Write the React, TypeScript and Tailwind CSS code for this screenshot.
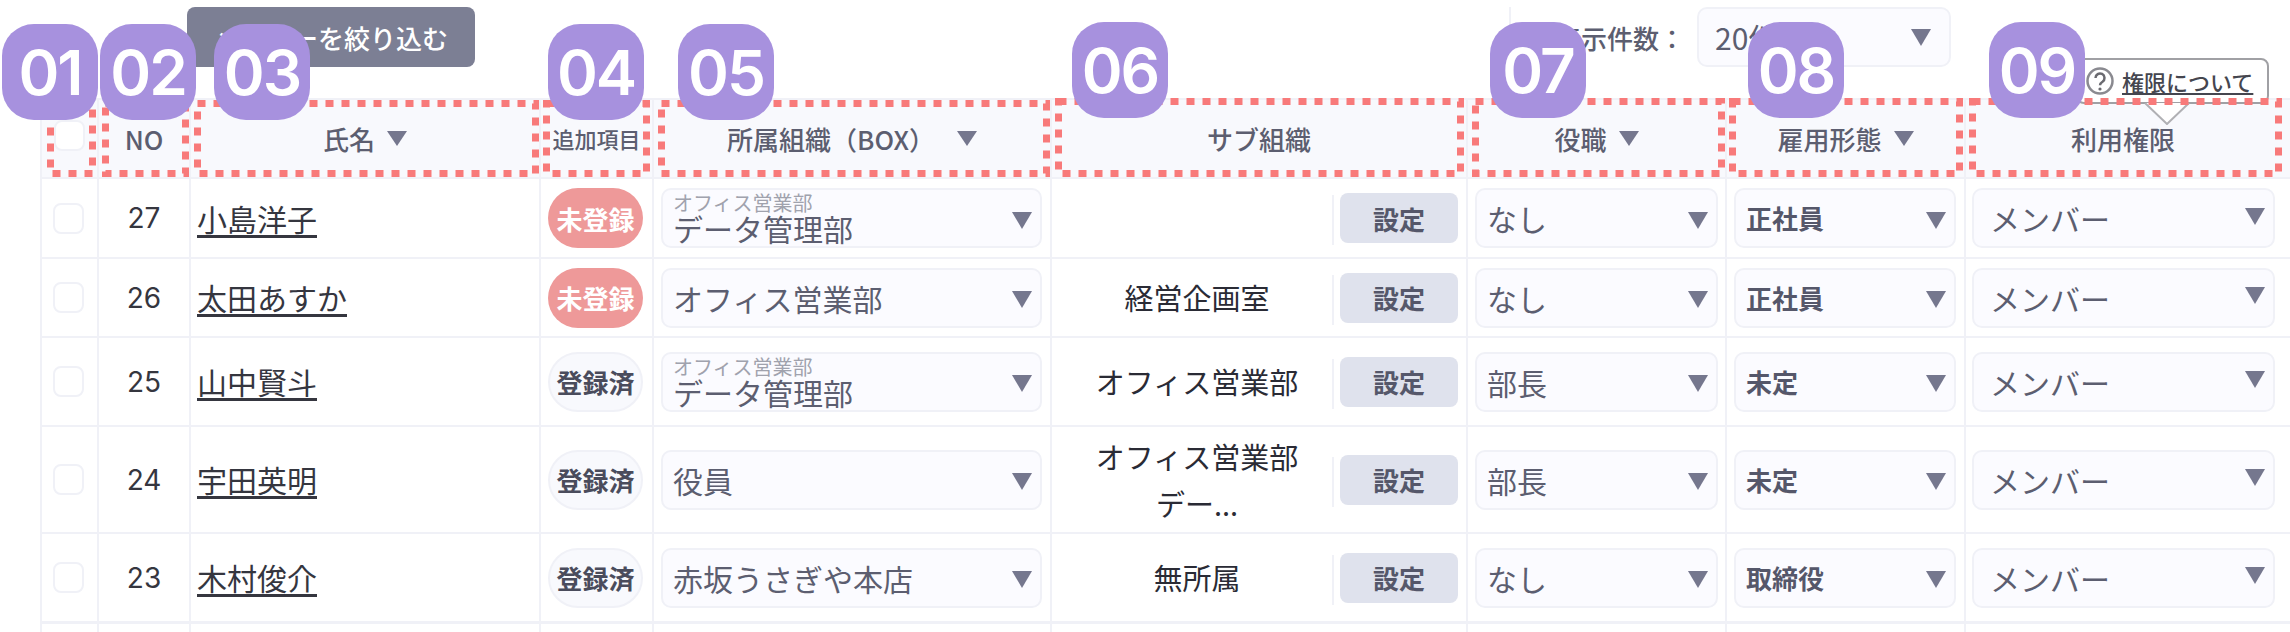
const COLS = "grid grid-cols-[57px_92px_350px_113px_398px_416px_259px_239px_326px]";
const LINE = "border-l-2 border-[#f0f1f7]";
const FONT = "font-['Noto_Sans_CJK_JP','Noto_Sans',sans-serif]";

function Tri({ className = "" }: { className?: string }) {
  return (
    <svg width="20" height="17" viewBox="0 0 20 17" className={"shrink-0 " + className}>
      <polygon points="0,0 20,0 10,17" fill="#75778e" />
    </svg>
  );
}

function Check({ bg = "bg-white" }: { bg?: string }) {
  return <div className={"w-[31px] h-[31px] rounded-lg border-2 border-[#f0f1f7] " + bg} />;
}

function Select({
  label,
  value,
  textClass = "text-[30px] text-[#5c5e70]",
  className = "",
  arrowClass = "mt-1",
}: {
  label?: string;
  value: string;
  textClass?: string;
  className?: string;
  arrowClass?: string;
}) {
  return (
    <div className={"h-[60px] rounded-[10px] border-2 border-[#f0f1f7] bg-[#fbfbff] flex items-center justify-between pr-[8px] " + className}>
      <div className="flex flex-col min-w-0">
        {label && <span className="text-[20px] leading-[20px] text-[#a0a2ad]">{label}</span>}
        <span className={"leading-[30px] whitespace-nowrap " + textClass}>{value}</span>
      </div>
      <Tri className={arrowClass} />
    </div>
  );
}

function Marker({
  n,
  boxClass,
  w,
  h,
  badgeClass,
}: {
  n: string;
  boxClass: string;
  w: number;
  h: number;
  badgeClass: string;
}) {
  return (
    <>
      <svg width={w} height={h} className={"absolute z-20 pointer-events-none " + boxClass}>
        <rect x="3.5" y="3.5" width={w - 7} height={h - 7} fill="none" stroke="#f87a7a" strokeWidth="7" strokeDasharray="8 8" />
      </svg>
      <div className={"absolute z-30 w-[96px] h-[96px] rounded-[32px] bg-[#a791de] flex items-center justify-center text-white text-[62px] font-['Inter',sans-serif] font-semibold tracking-[-2px] " + badgeClass}>
        {n}
      </div>
    </>
  );
}

const rows = [
  { h: "h-[80px]", no: 27, name: "小島洋子", reg: false, label: "オフィス営業部", org: "データ管理部", sub: [] as string[], role: "なし", emp: "正社員" },
  { h: "h-[79px]", no: 26, name: "太田あすか", reg: false, org: "オフィス営業部", sub: ["経営企画室"], role: "なし", emp: "正社員" },
  { h: "h-[89px]", no: 25, name: "山中賢斗", reg: true, label: "オフィス営業部", org: "データ管理部", sub: ["オフィス営業部"], role: "部長", emp: "未定" },
  { h: "h-[107px]", no: 24, name: "宇田英明", reg: true, org: "役員", sub: ["オフィス営業部", "デー..."], role: "部長", emp: "未定" },
  { h: "h-[89px]", no: 23, name: "木村俊介", reg: true, org: "赤坂うさぎや本店", sub: ["無所属"], role: "なし", emp: "取締役" },
];

function HeadArrow() {
  return (
    <svg width="20" height="15" viewBox="0 0 20 15" className="shrink-0">
      <polygon points="0,0 20,0 10,15" fill="#75778e" />
    </svg>
  );
}

export default function App() {
  const head = "relative flex items-center justify-center font-medium text-[26px] text-[#5c5e70] " + LINE;
  return (
    <div className={"w-[2290px] h-[632px] overflow-hidden bg-white " + FONT}>
      <div className="h-[98px] pl-[187px] flex items-start pt-[7px]">
        <div className="w-[288px] h-[60px] rounded-lg bg-[#7c7f94] text-white text-[26px] font-medium flex items-center justify-center">
          メンバーを絞り込む
        </div>
        <div className="ml-[1034px] w-0.5 h-[60px] bg-[#f0f1f7]" />
        <div className="ml-[44px] h-[60px] flex items-center text-[26px] text-[#5c5e70] font-medium">表示件数：</div>
        <Select value="20件" className="ml-[12px] w-[254px] pl-[16px] !pr-[18px]" arrowClass="mt-0" />
      </div>

      <div className="ml-[40px] w-[2250px] flex flex-col">
        <div className={COLS + " h-[79px] bg-[#f8f9fd] border-t-2 border-[#f0f1f7]"}>
          <div className={head}>
            <div className="mt-[-6px]"><Check /></div>
            <Marker n="01" boxClass="left-[5px] top-[0px]" w={49} h={77} badgeClass="-left-[40px] -top-[76px]" />
          </div>
          <div className={head}>
            NO
            <Marker n="02" boxClass="left-[3px] top-[0px]" w={87} h={77} badgeClass="left-[1px] -top-[76px]" />
          </div>
          <div className={head + " gap-3"}>
            氏名 <HeadArrow />
            <Marker n="03" boxClass="left-[3px] top-[0px]" w={345} h={77} badgeClass="left-[23px] -top-[76px]" />
          </div>
          <div className={head + " !text-[22px] font-bold"}>
            追加項目
            <Marker n="04" boxClass="left-[2px] top-[0px]" w={107} h={77} badgeClass="left-[7px] -top-[76px]" />
          </div>
          <div className={head + " gap-[22px]"}>
            所属組織（BOX）<HeadArrow />
            <Marker n="05" boxClass="left-[4px] top-[0px]" w={392} h={77} badgeClass="left-[24px] -top-[76px]" />
          </div>
          <div className={head}>
            サブ組織
            <Marker n="06" boxClass="left-[3px] -top-[2px]" w={409} h={79} badgeClass="left-[20px] -top-[78px]" />
          </div>
          <div className={head + " gap-3"}>
            役職 <HeadArrow />
            <Marker n="07" boxClass="left-[4px] -top-[2px]" w={253} h={79} badgeClass="left-[22px] -top-[78px]" />
          </div>
          <div className={head + " gap-3"}>
            雇用形態 <HeadArrow />
            <Marker n="08" boxClass="left-[2px] -top-[2px]" w={234} h={79} badgeClass="left-[21px] -top-[78px]" />
          </div>
          <div className={head + " pr-[10px]"}>
            利用権限
            <div className="absolute z-10 left-[110px] top-[-42px] w-[193px] h-[46px] rounded-lg border-2 border-[#a0a0a4] bg-white flex items-center pl-[8px] gap-[8px]">
              <svg width="28" height="28" viewBox="0 0 28 28" className="shrink-0">
                <circle cx="14" cy="14" r="12.5" fill="none" stroke="#8a8a90" strokeWidth="2.5" />
                <path d="M9.5 11a4.5 4.5 0 1 1 7 3.7c-1.6 1-2.5 1.8-2.5 3.6" fill="none" stroke="#6a6a70" strokeWidth="2.5" />
                <circle cx="14" cy="22" r="1.6" fill="#6a6a70" />
              </svg>
              <span className="text-[22px] font-medium text-[#45464f] underline leading-none whitespace-nowrap">権限について</span>
            </div>
            <svg width="46" height="22" viewBox="0 0 46 22" className="absolute z-10 left-[178px] top-[3px]">
              <polyline points="1,0 23,21 45,0" fill="#ffffff" stroke="#b0b0b4" strokeWidth="2" />
            </svg>
            <Marker n="09" boxClass="left-[3px] -top-[2px]" w={313} h={79} badgeClass="left-[23px] -top-[78px]" />
          </div>
        </div>

        {rows.map((r) => (
          <div key={r.no} className={COLS + " " + r.h + " border-t-2 border-[#f0f1f7]"}>
            <div className={LINE + " flex items-center justify-center pr-[2px]"}>
              <Check />
            </div>
            <div className={LINE + " flex items-center justify-center text-[28px] font-['Inter',sans-serif] text-[#35363f]"}>
              {r.no}
            </div>
            <div className={LINE + " flex items-center pl-[6px] text-[30px] text-[#35363f] underline underline-offset-4"}>
              {r.name}
            </div>
            <div className={LINE + " flex items-center pl-[7px]"}>
              <div
                className={
                  "w-[95px] h-[60px] rounded-full flex items-center justify-center text-[26px] font-bold " +
                  (r.reg ? "bg-[#f8f9fd] border-2 border-[#f0f1f7] text-[#4a4c5c]" : "bg-[#ee9999] text-white")
                }
              >
                {r.reg ? "登録済" : "未登録"}
              </div>
            </div>
            <div className={LINE + " flex items-center pl-[7px]"}>
              <Select label={r.label} value={r.org} className="w-[381px] pl-[10px]" />
            </div>
            <div className={LINE + " flex items-center pr-[8px]"}>
              <div className="flex-1 pl-[10px] flex flex-col items-center text-[29px] leading-[47px] text-[#2a2b35]">
                {r.sub.map((s) => (
                  <span key={s}>{s}</span>
                ))}
              </div>
              <div className="w-0.5 h-[50px] bg-[#f0f1f7] mr-[6px] mt-[4px]" />
              <div className="w-[118px] h-[50px] rounded-lg bg-[#dfe2ed] flex items-center justify-center text-[26px] font-bold text-[#55576a]">
                設定
              </div>
            </div>
            <div className={LINE + " flex items-center pl-[7px]"}>
              <Select value={r.role} className="w-[243px] pl-[10px]" />
            </div>
            <div className={LINE + " flex items-center pl-[7px]"}>
              <Select value={r.emp} textClass="text-[26px] font-bold text-[#55576a]" className="w-[222px] pl-[10px]" />
            </div>
            <div className={LINE + " flex items-center pl-[6px]"}>
              <Select value="メンバー" className="w-[303px] pl-[16px]" arrowClass="-mt-1" />
            </div>
          </div>
        ))}
        <div className={COLS + " h-[12px] border-t-[3px] border-[#f0f1f7]"}>
          {Array.from({ length: 9 }).map((_, i) => (
            <div key={i} className={LINE} />
          ))}
        </div>
      </div>
    </div>
  );
}
